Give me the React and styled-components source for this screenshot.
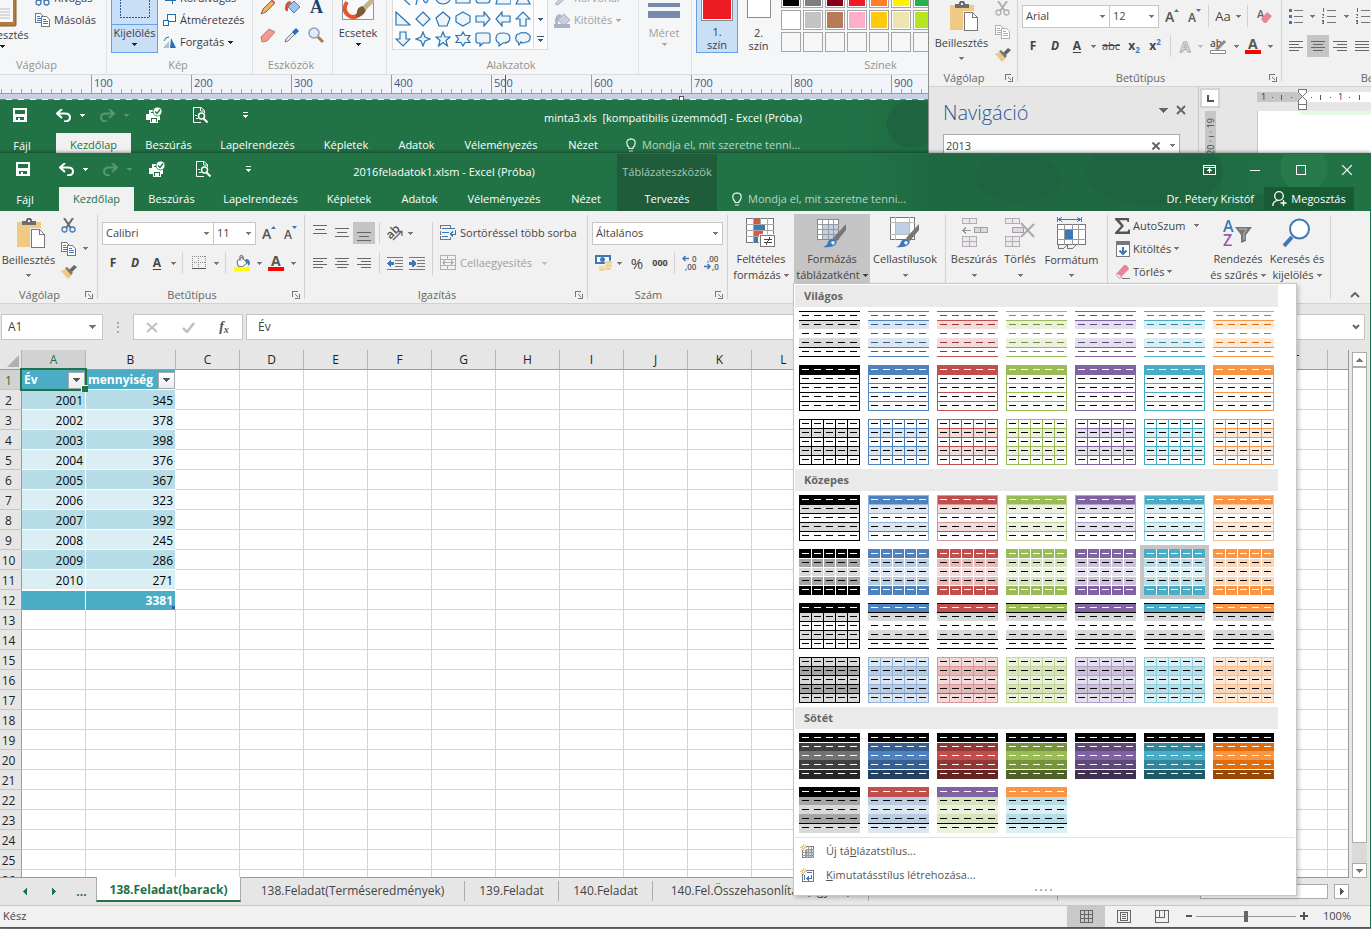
import styled, { createGlobalStyle, css } from 'styled-components'

const green = '#217346'
const darkGreen = '#1e5c3a'
const ink = '#444444'
const grey = '#777777'
const blue = '#3f78b5'
const tan = '#f0ca82'

const GlobalStyle = createGlobalStyle`
  * {
    box-sizing: border-box;
  }
  body {
    margin: 0;
    font-family: "Open Sans", "Noto Sans", sans-serif;
    font-size: 11px;
    line-height: 16px;
    color: ${ink};
    background: #e6e6e6;
  }
  button, input, select {
    font: inherit;
    color: inherit;
    margin: 0;
    padding: 0;
    border: 0;
    background: none;
    outline: none;
    border-radius: 0;
  }
  svg {
    display: block;
    flex: none;
  }
`

const Desktop = styled.div`
  height: 100vh;
  display: flex;
  flex-direction: column;
  overflow: hidden;
  background: #8d8d8d;
`
const BackRow = styled.div`
  display: flex;
  height: 153px;
  overflow: hidden;
`

/* ---------- shared ribbon parts ---------- */

const Ribbon = styled.div`
  display: flex;
  flex: none;
  height: 93px;
  background: #f1f1f1;
  border-bottom: 1px solid #d2d2d2;
  margin-top: ${p => p.$cut ? '-6px' : '0'};
`
const RibbonGroup = styled.div`
  display: flex;
  flex-direction: column;
  flex: none;
  width: ${p => p.$w}px;
  padding-top: 3px;
`
const GroupSep = styled.div`
  flex: none;
  width: 1px;
  margin: 4px 0;
  background: #d2d2d2;
`
const GroupBody = styled.div`
  display: flex;
  height: 69px;
  padding-left: ${p => p.$pad || 0}px;
`
const GroupLabel = styled.div`
  display: flex;
  align-items: center;
  height: 20px;
  padding: 4px 4px 0 0;
  color: #666;
  white-space: nowrap;
  overflow: hidden;
  span {
    flex: 1;
    text-align: center;
    padding-right: 6px;
    padding-left: ${p => p.$indent || 0}px;
  }
`
const BigButton = styled.button`
  display: flex;
  flex-direction: column;
  align-items: center;
  flex: none;
  width: ${p => p.$w}px;
  height: 69px;
  padding-top: 3px;
  white-space: nowrap;
  background: ${p => p.$on ? '#c5c5c5' : 'none'};
`
const BigIcon = styled.span`
  display: flex;
  align-items: center;
  justify-content: center;
  height: 32px;
  margin-bottom: 3px;
`
const Line = styled.span`
  display: flex;
  align-items: center;
  gap: 3px;
  height: 16px;
`
const ToolColumn = styled.div`
  display: flex;
  flex-direction: column;
  gap: 8px;
  padding-top: 8px;
`
const ToolRow = styled.div`
  display: flex;
  align-items: center;
  height: 22px;
`
const Tool = styled.button`
  display: flex;
  align-items: center;
  justify-content: center;
  flex: none;
  width: ${p => p.$w || 22}px;
  height: 22px;
  white-space: nowrap;
  background: ${p => p.$on ? '#c5c5c5' : 'none'};
  font-size: ${p => p.$size || 11}px;
  font-weight: ${p => p.$bold ? 700 : 400};
  font-style: ${p => p.$italic ? 'italic' : 'normal'};
  text-decoration: ${p => p.$line || 'none'};
  text-underline-offset: 2px;
  sub, sup {
    font-size: 8px;
    line-height: 8px;
    color: ${blue};
  }
  sub {
    align-self: flex-end;
    padding-bottom: 3px;
  }
  sup {
    align-self: flex-start;
    padding-top: 3px;
  }
`
const WideTool = styled.button`
  display: flex;
  align-items: center;
  gap: 4px;
  height: 22px;
  padding-left: 3px;
  white-space: nowrap;
  color: ${p => p.$off ? '#a0a0a0' : ink};
  svg:last-child {
    margin-left: ${p => p.$gap || 0}px;
  }
`
const ToolSep = styled.span`
  flex: none;
  width: 1px;
  height: ${p => p.$tall ? '54px' : '22px'};
  margin: ${p => p.$tall ? '8px 4px 0' : '0 4px'};
  background: #d2d2d2;
`
const SmallStack = styled.div`
  display: flex;
  flex-direction: column;
  width: ${p => p.$w}px;
`
const SmallButton = styled.button`
  display: flex;
  align-items: center;
  gap: 3px;
  height: 23px;
  white-space: nowrap;
  padding-left: ${p => p.$pad || 0}px;
  svg:last-child:not(:first-child) {
    margin-left: ${p => p.$gap || 0}px;
  }
`
const ComboFrame = styled.span`
  display: flex;
  align-items: center;
  flex: none;
  width: ${p => p.$w}px;
  height: 23px;
  padding: 0 4px 0 3px;
  background: #fff;
  border: 1px solid #c6c6c6;
  margin-left: ${p => p.$join ? '-1px' : '0'};
  select {
    flex: 1;
    min-width: 0;
    appearance: none;
  }
`
const CaretButton = styled.button`
  display: flex;
  align-items: center;
  justify-content: center;
  flex: none;
  width: ${p => p.$w || 10}px;
  height: ${p => p.$h || 22}px;
`

function Ico({ w = 16, h = 16, soft, children }) {
  return (
    <svg width={w} height={h} viewBox={`0 0 ${w} ${h}`} fill="none" shapeRendering={soft ? 'auto' : 'crispEdges'} aria-hidden="true">
      {children}
    </svg>
  )
}

function Caret({ color = grey }) {
  return <Ico w={5} h={3}><path d="M0 0h5v1H4v1H3v1H2V2H1V1H0z" fill={color} /></Ico>
}

function DropCaret({ color, w, h, label = 'Továbbiak' }) {
  return <CaretButton $w={w} $h={h} aria-label={label}><Caret color={color} /></CaretButton>
}

function Combo({ w, value, label, join }) {
  return (
    <ComboFrame $w={w} $join={join}>
      <select aria-label={label} defaultValue={value}>
        <option>{value}</option>
      </select>
      <Caret />
    </ComboFrame>
  )
}

function Launcher() {
  return (
    <Ico w={8} h={8}>
      <path d="M0.5 6V0.5H6M3 3l3 3M7.5 3v4.5H3" stroke="#777" />
    </Ico>
  )
}

/* ---------- ribbon icons ---------- */

const PasteIcon = () => (
  <Ico w={32} h={32}>
    <g transform="translate(4 1)">
      <path d="M0 4h24v25H0z" fill={tan} />
      <path d="M5 7V3h4V1h1V0h4v1h1v2h4v4z" fill="#6d6d6d" />
      <path d="M11 2h2v2h-2z" fill="#f1f1f1" />
      <path d="M13 10h11l4 4v17H13z" fill="#f1f1f1" />
      <path d="M14.500 11.500h8l5 5v13h-13z" fill="#fff" stroke="#777" />
      <path d="M22.500 11.500v5h5" stroke="#777" />
    </g>
  </Ico>
)
const CutIcon = ({ off }) => (
  <Ico w={15} h={15} soft>
    <path d="M3 0l6.500 9.500M12 0L5.500 9.500" stroke={off ? '#b0b0b0' : '#666'} strokeWidth="2" />
    <circle cx="3.500" cy="11.500" r="2.500" stroke={off ? '#b0b0b0' : blue} strokeWidth="1.300" />
    <circle cx="11.500" cy="11.500" r="2.500" stroke={off ? '#b0b0b0' : blue} strokeWidth="1.300" />
  </Ico>
)
const CopyIcon = ({ off }) => {
  const line = off ? '#b0b0b0' : '#777'
  const dash = off ? '#b0b0b0' : blue
  return (
    <Ico w={15} h={14}>
      <path d="M0.500 0.500h5l3 3v6h-8z" fill="#fff" stroke={line} />
      <path d="M2 3.500h3M2 5.500h4M2 7.500h4" stroke={dash} />
      <path d="M6.500 3.500h5l3 3v7h-8z" fill="#fff" stroke={line} />
      <path d="M8 6.500h3M8 8.500h5M8 10.500h5" stroke={dash} />
    </Ico>
  )
}
const PainterIcon = () => (
  <Ico w={16} h={14} soft>
    <path d="M0 6l5-2 6 6-4 4z" fill={tan} />
    <path d="M4 3l2-1 6 6-2 2z" fill="#777" />
    <path d="M8 5l5-5 3 2-5 5z" fill="#666" />
  </Ico>
)
const FontSizeIcon = ({ down }) => (
  <Ico w={14} h={16} soft>
    <text x="0" y="14" fontSize={down ? 12 : 14} fontWeight="600" fill="#555">A</text>
    <path d={down ? 'M8 1h5l-2.500 3z' : 'M9 4h5l-2.500-3z'} fill={blue} />
  </Ico>
)
const BordersIcon = () => (
  <Ico w={14} h={14}>
    <path d="M0 0.500h14M0 6.500h14M0.500 0v12M6.500 0v12M13.500 0v12" stroke="#888" strokeDasharray="1 1" />
    <path d="M0 12.500h14" stroke="#555" />
  </Ico>
)
const FillIcon = () => (
  <Ico w={17} h={16} soft>
    <path d="M3 6l5-4 5 6-5 4-4-1z" fill="#fff" stroke="#666" />
    <path d="M6 6V1q1-1 3 0v4" stroke="#666" />
    <path d="M12 4q4 0 4 5l-2 2q0-4-3-5z" fill={blue} />
    <path d="M0 12h16v4H0z" fill="#ff0" />
  </Ico>
)
const FontColorIcon = () => (
  <Ico w={16} h={16} soft>
    <text x="3" y="11" fontSize="14" fontWeight="700" fill="#555">A</text>
    <path d="M0 12h16v4H0z" fill="#f00" />
  </Ico>
)
const lineSets = {
  top: [[0, 14, 0], [2, 10, 4], [0, 14, 8]],
  left: [[0, 14, 0], [0, 10, 3], [0, 14, 6], [0, 10, 9]],
  center: [[0, 14, 0], [2, 10, 3], [0, 14, 6], [2, 10, 9]],
  right: [[0, 14, 0], [4, 10, 3], [0, 14, 6], [4, 10, 9]],
  full: [[0, 14, 0], [0, 14, 3], [0, 14, 6], [0, 14, 9]]
}
const AlignIcon = ({ kind, drop = 0 }) => (
  <Ico w={14} h={18}>
    {lineSets[kind].map(([x, w, y]) => <rect key={y} x={x} y={y + 4 + drop} width={w} height="1" fill="#666" />)}
  </Ico>
)
const OrientationIcon = () => (
  <Ico w={17} h={16} soft>
    <text x="0" y="12" fontSize="12" fontWeight="600" fill="#555" transform="rotate(-45 5 9)">ab</text>
    <path d="M6 15l8-8M10.500 6.500H15V11" stroke="#666" strokeWidth="1.300" />
  </Ico>
)
const IndentIcon = ({ more }) => (
  <Ico w={17} h={13}>
    <path d="M0 0.500h16M8 3.500h8M8 6.500h8M8 9.500h8M0 12.500h16" stroke="#777" />
    {more
      ? <path d="M0 5h3V3h1l3 3v1L4 10H3V8H0z" fill={blue} />
      : <path d="M7 5H4V3H3L0 6v1l3 3h1V8h3z" fill={blue} />}
  </Ico>
)
const WrapIcon = () => (
  <Ico w={16} h={16}>
    <path d="M0.500 4V0.500h10V4M0.500 6v4M0.500 11v3.500h10V12" stroke="#777" />
    <path d="M2 3.500h13M2 7.500h7M2 11.500h6" stroke={blue} />
    <path d="M15.500 5v4h-4M13 6.500L10.500 9l2.500 2.500" stroke={blue} />
  </Ico>
)
const MergeIcon = () => (
  <Ico w={16} h={16}>
    <path d="M0.500 0.500h15v14H0.500zM0 4.500h16M0 10.500h16M7.500 0v4M7.500 11v4M3 7.500h10M5 5.500l-2 2 2 2M11 5.500l2 2-2 2" stroke="#b5adb5" />
  </Ico>
)
const CurrencyIcon = () => (
  <Ico w={17} h={16} soft>
    <path d="M1 1h14v7H1z" fill="#fff" stroke={blue} strokeWidth="2" />
    <circle cx="7.500" cy="4.500" r="2.500" fill={blue} />
    <path d="M10 6h7v3h-7zM10 9h7v3h-7zM4 11h6v2H4zM4 13h6v3H4zM10 12h6v3h-6z" fill={tan} stroke="#f1f1f1" strokeWidth="0.500" />
  </Ico>
)
const DecimalIcon = ({ less }) => (
  <Ico w={16} h={16} soft>
    <text x={less ? 3 : 10} y="7" fontSize="8" fontWeight="600" fill="#555">{less ? ',00' : '0'}</text>
    <text x={less ? 8 : 3} y="15" fontSize="8" fontWeight="600" fill="#555">{less ? ',0' : ',00'}</text>
    <path d={less ? 'M0 11.500h6M3.500 9L6 11.500 3.500 14' : 'M7 3.500H1M3.500 1L1 3.500 3.500 6'} stroke={blue} strokeWidth="1.500" />
  </Ico>
)
const ConditionalIcon = () => (
  <Ico w={30} h={30}>
    <path d="M0.500 0.500h27v24h-27z" fill="#fff" stroke="#777" />
    <path d="M0 6.500h28M0 12.500h28M0 18.500h28M7.500 0v25M14.500 0v25M21.500 0v25" stroke="#aaa" />
    <path d="M8 1h6v5H8zM8 13h9v5H8z" fill="#d9593a" />
    <path d="M8 7h11v5H8zM8 19h4v5H8z" fill={blue} />
    <path d="M13 16h17v14H13z" fill="#f1f1f1" />
    <path d="M14.500 17.500h14v11h-14z" fill="#fff" stroke="#777" />
    <path d="M18 21.500h8M18 24.500h8M24 19l-4 8" stroke="#444" />
  </Ico>
)
const BrushOver = () => (
  <g shapeRendering="auto">
    <path d="M29 7v6l-9 11-4-3z" fill="#777" />
    <path d="M6 30q4-1 5-5 2-4 6-3 4 2 2 5-4 4-13 3z" fill={blue} />
    <path d="M14 26q0-2 3-2l1 2-2 2z" fill="#e8f0f8" />
  </g>
)
const FormatTableIcon = () => (
  <Ico w={30} h={31}>
    <path d="M0.500 2.500h21v20h-21z" fill="#fff" />
    <path d="M6 8h16v15H6z" fill="#bfd0e6" />
    <path d="M0.500 2.500h21v20h-21z" stroke="#888" />
    <path d="M0 7.500h22M0 12.500h22M0 17.500h22M5.500 2v21M11.500 2v21M16.500 2v21" stroke="#999" />
    <BrushOver />
  </Ico>
)
const CellStyleIcon = () => (
  <Ico w={30} h={31}>
    <path d="M0.500 0.500h24v22h-24z" fill="#fff" stroke="#777" />
    <path d="M0 5.500h25M0 17.500h25M5.500 0v23M19.500 0v23" stroke="#bbb" />
    <path d="M6 6h13v11H6z" fill="#bfd0e6" />
    <BrushOver />
  </Ico>
)
const InsertIcon = () => (
  <Ico w={27} h={30}>
    <path d="M1.500 0.500h14v5h-14zM8.500 0v6M1.500 18.500h14v10h-14zM8.500 18v11M1 23.500h15" fill="#ede8ee" stroke="#b5adb5" />
    <path d="M13.500 9.500h13v5h-13zM19.500 9v6" fill="#dcd8dd" stroke="#a5a0a5" />
    <path d="M10 12.500H2M5 9.500L2 12.500l3 3" stroke="#999" />
  </Ico>
)
const DeleteIcon = () => (
  <Ico w={30} h={30}>
    <path d="M0.500 0.500h14v5h-14zM7.500 0v6M0.500 18.500h14v10h-14zM7.500 18v11M0 23.500h15" fill="#ede8ee" stroke="#b5adb5" />
    <path d="M7.500 9.500h11v5h-11z" fill="#dcd8dd" stroke="#a5a0a5" />
    <path d="M16 5l13 14M29 6L16 19" stroke="#aaa" strokeWidth="2" shapeRendering="auto" />
  </Ico>
)
const FormatIcon = () => (
  <Ico w={29} h={32}>
    <path d="M0.500 0v5M24.500 0v5M2 2.500h21M5 0L2 2.500 5 5M20 0l3 2.500L20 5" stroke={blue} />
    <path d="M0.500 7.500h28v20h-28z" fill="#fff" stroke="#777" />
    <path d="M0 12.500h29M0 22.500h29M7.500 7v21M15.500 7v21M21.500 7v21" stroke="#999" />
    <path d="M8 13h8v9H8z" fill={blue} />
    <path d="M1 28v3h6l3-3M10 28v3h6l3-3" stroke="#777" />
  </Ico>
)
const SumIcon = () => (
  <Ico w={15} h={16} soft>
    <path d="M0 0h14v4h-1.500L12 2.300H4.500L9 8l-5 5.500h8.500l1-2H15V16H0v-1.500L6 8 0 1.500z" fill="#555" />
  </Ico>
)
const FillDownIcon = () => (
  <Ico w={14} h={16}>
    <path d="M0.500 0.500h13v15H0.500z" fill="#fff" stroke="#777" />
    <path d="M0 0h14v4H0z" fill="#777" />
    <path d="M7 6v7M3.500 9.500L7 13l3.500-3.500" stroke={blue} strokeWidth="2" shapeRendering="auto" />
  </Ico>
)
const EraseIcon = () => (
  <Ico w={14} h={14} soft>
    <path d="M1 8L8 0q2-1 4 2t-1 4l-6 6H3Q0 11 1 8z" fill="#e88594" />
    <path d="M1 8l5 4-1 1H3Q0 11 1 8z" fill="#fff" stroke="#e88594" />
    <path d="M6 13.500h8" stroke="#777" />
  </Ico>
)
const ClearFormatIcon = () => (
  <Ico w={15} h={16} soft>
    <text x="0" y="10" fontSize="11" fontWeight="600" fill="#666">A</text>
    <path d="M4 11l6-7 5 4-6 7H7z" fill="#e88594" />
  </Ico>
)
const SortIcon = () => (
  <Ico w={30} h={30} soft>
    <text x="0" y="14" fontSize="16" fontWeight="600" fill={blue}>A</text>
    <text x="0" y="28" fontSize="16" fontWeight="600" fill="#9459b5">Z</text>
    <path d="M12 9h17l-6 8v6l-5 2v-8z" fill="#777" />
    <path d="M16 11h8l-3 4v7" stroke="#bbb" />
  </Ico>
)
const FindIcon = () => (
  <Ico w={29} h={30} soft>
    <path d="M1 28l8-9" stroke={blue} strokeWidth="4" />
    <circle cx="16.500" cy="11" r="9.500" fill="#fff" stroke={blue} strokeWidth="2" />
  </Ico>
)

/* ---------- Paint window ---------- */

const PaintSide = styled.div`
  flex: 1;
  min-width: 0;
  height: 153px;
  overflow: hidden;
`
const PaintRibbon = styled.div`
  display: flex;
  height: 75px;
  overflow: hidden;
  background: #f5f6f7;
  border-bottom: 1px solid #dadbdc;
`
const PaintGroup = styled.div`
  display: flex;
  flex-direction: column;
  justify-content: flex-end;
  flex: none;
  width: ${p => p.$w}px;
  height: 74px;
  overflow: hidden;
  border-right: 1px solid #e2e3e4;
`
const PaintBody = styled.div`
  display: flex;
  align-items: flex-end;
  height: 53px;
  padding-left: ${p => p.$pad || 0}px;
`
const PaintLabel = styled.div`
  height: 21px;
  padding: 4px ${p => p.$right || 0}px 0 0;
  text-align: center;
  color: #929294;
`
const PaintBig = styled.button`
  display: flex;
  flex-direction: column;
  align-items: center;
  justify-content: flex-end;
  flex: none;
  width: ${p => p.$w}px;
  height: 74px;
  margin-left: ${p => p.$ml || 0}px;
  white-space: nowrap;
  color: ${p => p.$off ? '#a0a0a4' : '#3b3b4a'};
  ${p => p.$on && css`
    background: #c9dff5;
    border: 1px solid #62a2e4;
  `}
`
const PaintText = styled.span`
  display: flex;
  flex-direction: column;
  align-items: center;
  line-height: 13px;
  height: 28px;
  width: 100%;
  padding-top: 1px;
  gap: ${p => p.$two ? '0' : '4px'};
  border-top: ${p => p.$split ? '1px solid #62a2e4' : '0'};
`
const PaintStack = styled.div`
  display: flex;
  flex-direction: column;
  justify-content: flex-end;
  padding-left: ${p => p.$pad || 0}px;
`
const PaintSmall = styled.button`
  display: flex;
  align-items: center;
  gap: 4px;
  height: 22px;
  white-space: nowrap;
  color: ${p => p.$off ? '#a0a0a4' : '#3b3b4a'};
`
const ToolGrid = styled.div`
  display: grid;
  grid-template-columns: repeat(3, 24px);
  grid-auto-rows: 28px;
  justify-items: center;
  align-items: center;
  margin-bottom: 4px;
`
const ShapeBox = styled.div`
  display: flex;
  flex: none;
  margin: 0 0 3px;
  border: 1px solid #dadbdc;
  background: #fbfcfd;
`
const ShapeGrid = styled.div`
  display: grid;
  grid-template-columns: repeat(7, 20px);
  grid-auto-rows: 20px;
  justify-items: center;
  align-items: center;
`
const ShapeScroll = styled.div`
  display: grid;
  grid-template-rows: repeat(3, 20px);
  justify-items: center;
  align-items: center;
  width: 14px;
  border-left: 1px solid #dadbdc;
`
const Swatch = styled.span`
  display: block;
  width: ${p => p.$w}px;
  height: 40px;
  margin-bottom: ${p => p.$gap}px;
  background: ${p => p.$color};
  border: 1px solid #8a8a8a;
  box-shadow: inset 0 0 0 1px #fff;
`
const Palette = styled.div`
  display: grid;
  grid-template-columns: repeat(7, 20px);
  grid-auto-rows: 20px;
  gap: 2px;
  margin: 0 0 1px 2px;
`
const Chip = styled.button`
  border: 1px solid #a5a5a5;
  background: ${p => p.$color || '#f5f6f7'};
  box-shadow: ${p => p.$color ? 'inset 0 0 0 1px #fff' : 'none'};
`
const Ruler = styled.div`
  display: flex;
  position: relative;
  height: 19px;
  overflow: hidden;
  color: #43597c;
  border-bottom: 1px solid #8e9cb5;
  background: repeating-linear-gradient(90deg, transparent 0 1px, #9aa3b5 1px 2px, transparent 2px 10px) 0 100% / 100% 4px no-repeat, #f2f3f9;
`
const RulerMark = styled.span`
  flex: none;
  width: ${p => p.$first ? 91 : 100}px;
  padding-left: 2px;
  border-left: ${p => p.$first ? '0' : '1px solid #8e9cb5'};
`
const RulerCursor = styled.span`
  position: absolute;
  top: 0;
  left: 505px;
  width: 1px;
  height: 19px;
  background: #e02020;
`
const CanvasEdge = styled.div`
  display: flex;
  align-items: flex-end;
  justify-content: center;
  height: 6px;
  padding-left: 434px;
  background: repeating-linear-gradient(90deg, #3b93dc 0 6px, #fff 6px 12px) 0 100% / 100% 1px no-repeat, #c8d1e3;
`
const CanvasHandle = styled.span`
  width: 5px;
  height: 4px;
  background: #fff;
  border: 1px solid #555;
  border-bottom: 0;
`

const shapeRows = [
  'M1 1l14 13',
  'M1 14q3-16 7-6t7-7',
  'M8 2a7 5.500 0 1 0 .1 0z',
  'M1 1h14v11H1z',
  'M4 1h8q3 0 3 3v5q0 3-3 3H4q-3 0-3-3V4q0-3 3-3z',
  'M4 2h10v6h2v5H1z',
  'M8 0l7 13H1z',
  'M1 1v13h14z',
  'M8 1l7 7-7 7-7-7z',
  'M8 1l7 6-3 8H4L1 7z',
  'M8 1l7 4v6l-7 4-7-4V5z',
  'M1 5h8V1l6 7-6 7v-4H1z',
  'M15 5H7V1L1 8l6 7v-4h8z',
  'M5 15V8H1l7-7 7 7h-4v7z',
  'M5 1v7H1l7 7 7-7h-4V1z',
  'M8 1l2 5 5 2-5 2-2 5-2-5-5-2 5-2z',
  'M8 1l2 5h5l-4 3.500L12.500 15 8 11.500 3.500 15 5 9.500 1 6h5z',
  'M8 1l2 3.500h5L12.500 8l2.500 3.500h-5L8 15l-2-3.500H1L3.500 8 1 4.500h5z',
  'M3 2h10q2 0 2 2v6q0 2-2 2H8l-3 3v-3H3q-2 0-2-2V4q0-2 2-2z',
  'M8 2q7 0 7 5t-7 5l-4 3v-3Q1 11 1 7q0-5 7-5z',
  'M4 3q2-2 4-1 3-1 5 1 3 2 2 4 0 4-4 4-3 2-5 0l-2 3-1-3Q0 9 1 6q0-3 3-3z'
]
const paletteColors = [
  '#000000', '#7f7f7f', '#880015', '#ed1c24', '#ff7f27', '#fff200', '#22b14c',
  '#ffffff', '#c3c3c3', '#b97a57', '#ffaec9', '#ffc90e', '#efe4b0', '#b5e61d',
  '', '', '', '', '', '', ''
]

const BucketIcon = ({ off }) => (
  <Ico soft>
    <path d="M4 8l6-6 6 6-6 6z" fill={off ? '#c7cfdf' : '#9cc4ea'} stroke={off ? '#a9b3c7' : '#5a7fa8'} />
    <path d="M1 9q0-6 5-7l2 2Q3 6 4 12q-3 1-3-3z" fill={off ? '#a9b3c7' : '#d9532c'} />
    {off && <path d="M0 12h16v4H0z" fill="#a9b3c7" />}
  </Ico>
)

function Paint() {
  return (
    <>
      <PaintRibbon>
        <PaintGroup $w={107}>
          <PaintBody>
            <PaintBig $w={56} $ml={-26}>
              <Ico w={30} h={48} soft>
                <path d="M1 0h28v46q0 1-1 1H1z" fill="#b07c3e" stroke="#8a5c28" />
                <path d="M1 4h25v39H1z" fill="#f7f7f7" />
                <path d="M3 30h20M3 33h20M3 36h20M3 39h20" stroke="#b9bfc9" />
              </Ico>
              <PaintText>Beillesztés<Caret color="#222" /></PaintText>
            </PaintBig>
            <PaintStack $pad={5}>
              <PaintSmall><CutIcon />Kivágás</PaintSmall>
              <PaintSmall><CopyIcon />Másolás</PaintSmall>
              <PaintSmall />
            </PaintStack>
          </PaintBody>
          <PaintLabel $right={33}>Vágólap</PaintLabel>
        </PaintGroup>
        <PaintGroup $w={146}>
          <PaintBody $pad={4}>
            <PaintBig $w={47} $on>
              <Ico w={30} h={28}><path d="M0.500 0v21.500h29V0" stroke="#1f5fa8" strokeDasharray="2 1" /></Ico>
              <PaintText $split>Kijelölés<Caret color="#222" /></PaintText>
            </PaintBig>
            <PaintStack $pad={5}>
              <PaintSmall>
                <Ico w={13}><path d="M2.500 0v10.500H13M0 3.500h9.500V14" stroke="#1f6fb0" /></Ico>Körülvágás
              </PaintSmall>
              <PaintSmall>
                <Ico w={13} h={12}><path d="M4.500 0.500h8v7h-8z" fill="#fff" stroke="#1f6fb0" /><path d="M0.500 6.500h5v5h-5z" fill="#fff" stroke="#1f6fb0" /></Ico>Átméretezés
              </PaintSmall>
              <PaintSmall>
                <Ico w={13} h={13} soft><path d="M0 12h6V5z" fill="#b8bcc4" /><path d="M7 12h6L8 2z" fill="#2672b8" /><path d="M1 5q1-4 5-4" stroke="#2672b8" /></Ico>Forgatás<Caret color="#222" />
              </PaintSmall>
            </PaintStack>
          </PaintBody>
          <PaintLabel $right={3}>Kép</PaintLabel>
        </PaintGroup>
        <PaintGroup $w={80}>
          <PaintBody $pad={3}>
            <ToolGrid>
              <Ico soft><path d="M1 15l2-5 9-9 3 3-9 9z" fill="#f2b25c" stroke="#7c6a55" /><path d="M11 2l3 3 1-2-2-2z" fill="#d9695f" /></Ico>
              <BucketIcon />
              <Ico soft><text x="2" y="14" fontFamily="Liberation Serif, serif" fontSize="18" fontWeight="700" fill="#233f6b">A</text></Ico>
              <Ico soft><path d="M1 10l8-8 6 3-8 9-5 1z" fill="#f0998f" stroke="#c9786f" /></Ico>
              <Ico soft><path d="M1 15l1-3 7-7 2 2-7 7z" fill="#dfeaf5" stroke="#777" /><path d="M8 5l4-4 3 3-4 4z" fill="#2672b8" /></Ico>
              <Ico soft><circle cx="6" cy="6" r="5" fill="#dcecfa" stroke="#8ea2b8" strokeWidth="1.500" /><path d="M10 10l5 5" stroke="#a9794f" strokeWidth="3" /></Ico>
            </ToolGrid>
          </PaintBody>
          <PaintLabel $right={3}>Eszközök</PaintLabel>
        </PaintGroup>
        <PaintGroup $w={54}>
          <PaintBody>
            <PaintBig $w={50}>
              <Ico w={32} h={27} soft>
                <path d="M0.500 0.500h31v21h-31z" fill="#f7f9fb" stroke="#8b97a5" />
                <path d="M5 4q-5 8 1 13t13-2" stroke="#e8562a" strokeWidth="4" />
                <path d="M15 14q0-5 6-6l3 4q-2 6-9 7-2 0 0-5z" fill="#7c5a3a" />
                <path d="M21 8l8-8h3v4l-8 8z" fill="#c9b28a" />
              </Ico>
              <PaintText>Ecsetek<Caret color="#222" /></PaintText>
            </PaintBig>
          </PaintBody>
          <PaintLabel />
        </PaintGroup>
        <PaintGroup $w={252}>
          <PaintBody $pad={5}>
            <ShapeBox>
              <ShapeGrid>
                {shapeRows.map(d => (
                  <Ico key={d} soft><path d={d} fill="#edf4fa" stroke="#2a74b5" strokeWidth="1.200" /></Ico>
                ))}
              </ShapeGrid>
              <ShapeScroll>
                <span /><Caret color="#43597c" />
                <Ico w={7} h={6}><path d="M0 0h7v1H0zM1 3h5v1H5v1H4v1H3V5H2V4H1z" fill="#43597c" /></Ico>
              </ShapeScroll>
            </ShapeBox>
            <PaintStack $pad={6}>
              <PaintSmall $off><Ico soft><path d="M1 14L12 2l3 3L4 15z" fill="#c7cfdf" stroke="#a9b3c7" /></Ico>Körvonal</PaintSmall>
              <PaintSmall $off><BucketIcon off />Kitöltés<Caret color="#aaa" /></PaintSmall>
              <PaintSmall />
            </PaintStack>
          </PaintBody>
          <PaintLabel $right={3}>Alakzatok</PaintLabel>
        </PaintGroup>
        <PaintGroup $w={53}>
          <PaintBody>
            <PaintBig $w={50} $off>
              <Ico w={32} h={22}><path d="M0 0h32v4H0zM0 8h32v7H0z" fill="#7589ad" /></Ico>
              <PaintText>Méret<Caret color="#aaa" /></PaintText>
            </PaintBig>
          </PaintBody>
          <PaintLabel />
        </PaintGroup>
        <PaintGroup $w={378}>
          <PaintBody $pad={4}>
            <PaintBig $w={42} $on>
              <Swatch $w={32} $gap={3} $color="#ed1c24" />
              <PaintText $two><span>1.</span><span>szín</span></PaintText>
            </PaintBig>
            <PaintBig $w={41}>
              <Swatch $w={24} $gap={7} $color="#fff" />
              <PaintText $two><span>2.</span><span>szín</span></PaintText>
            </PaintBig>
            <Palette>
              {paletteColors.map((c, i) => <Chip key={i} $color={c} aria-label={`${i + 1}. szín`} />)}
            </Palette>
          </PaintBody>
          <PaintLabel>Színek</PaintLabel>
        </PaintGroup>
      </PaintRibbon>
      <Ruler>
        <RulerMark $first />
        {[100, 200, 300, 400, 500, 600, 700, 800, 900, 1000].map(n => <RulerMark key={n}>{n}</RulerMark>)}
        <RulerCursor />
      </Ruler>
      <CanvasEdge><CanvasHandle /></CanvasEdge>
    </>
  )
}

/* ---------- Excel title bar and tabs ---------- */

const ExcelHeader = styled.header`
  flex: none;
  padding-left: ${p => p.$inset}px;
  color: #fff;
  background:
    radial-gradient(ellipse 44px 24px at calc(100% - 352px) 24px, #1e6440 96%, transparent),
    radial-gradient(ellipse 70px 34px at calc(100% - 215px) 18px, #1e6440 96%, transparent),
    radial-gradient(ellipse 36px 12px at calc(100% - 90px) 50px, #1e6440 96%, transparent),
    radial-gradient(ellipse 24px 24px at calc(100% - 66px) 14px, #267a4c 96%, transparent),
    linear-gradient(90deg, ${green} 0, ${green} 63%, #1f6841 68%, #1f6841 86%, ${green} 96%);
`
const BackHeader = styled(ExcelHeader)`
  background: radial-gradient(ellipse 26px 24px at calc(100% - 16px) 24px, #1e6440 96%, transparent), linear-gradient(90deg, ${green} 90%, #1f6c42);
`
const TitleRow = styled.div`
  display: flex;
  height: 33px;
`
const QuickCell = styled.button`
  display: flex;
  align-items: center;
  justify-content: center;
  flex: none;
  width: ${p => p.$w}px;
  height: 30px;
  margin-left: ${p => p.$ml || 0}px;
  opacity: ${p => p.$off ? 0.250 : 1};
`
const TitleText = styled.div`
  flex: none;
  width: ${p => p.$w ? p.$w + 'px' : 'auto'};
  padding-top: 10px;
  margin-left: ${p => p.$ml || 0}px;
  text-align: center;
  white-space: pre;
`
const ContextTitle = styled.div`
  flex: none;
  width: 100px;
  padding-top: 10px;
  text-align: center;
  white-space: nowrap;
  color: #a6c8b4;
  background: ${darkGreen};
`
const Spacer = styled.div`
  flex: 1;
`
const WindowButton = styled.button`
  display: flex;
  align-items: center;
  justify-content: center;
  width: 46px;
  height: 31px;
`
const TabRow = styled.nav`
  display: flex;
  height: 24px;
`
const Tab = styled.button`
  flex: none;
  width: ${p => p.$w}px;
  height: 24px;
  margin-right: ${p => p.$mr || 0}px;
  padding-top: ${p => p.$mr ? '2px' : '0'};
  white-space: nowrap;
  color: ${p => p.$on ? green : '#fff'};
  background: ${p => p.$on ? '#f1f1f1' : p.$context ? darkGreen : 'none'};
`
const TellMe = styled.label`
  display: flex;
  align-items: center;
  gap: 6px;
  width: 200px;
  padding-left: ${p => p.$pad}px;
  input {
    flex: 1;
    min-width: 0;
  }
  input::placeholder {
    color: #bad5c5;
    opacity: 1;
  }
`
const UserName = styled.span`
  padding: 4px 10px 0 0;
`
const ShareButton = styled.button`
  display: flex;
  align-items: center;
  justify-content: center;
  gap: 4px;
  width: 90px;
  height: 23px;
  margin-right: 16px;
  background: #185a34;
`

function QuickAccess() {
  return (
    <>
      <QuickCell $w={40} aria-label="Mentés">
        <Ico w={14} h={14}>
          <path d="M0 0h14v14H0zM2 2v4h10V2zM3 9v3h2v-2h2v2h4V9z" fill="#fff" fillRule="evenodd" />
        </Ico>
      </QuickCell>
      <QuickCell $w={30} $ml={8} aria-label="Visszavonás">
        <Ico w={15} h={13} soft><path d="M6 0L1 4.500 6 9M1.500 4.500H9q5 0 5 4t-6 4" stroke="#fff" strokeWidth="2" /></Ico>
      </QuickCell>
      <DropCaret color="#fff" w={8} h={30} />
      <QuickCell $w={30} $ml={6} $off aria-label="Ismét">
        <Ico w={15} h={13} soft><path d="M9 0l5 4.500L9 9M13.500 4.500H6q-5 0-5 4t6 4" stroke="#fff" strokeWidth="2" /></Ico>
      </QuickCell>
      <QuickCell $w={8} $off aria-label="Ismétlések"><Caret color="#fff" /></QuickCell>
      <QuickCell $w={48} aria-label="Gyorsnyomtatás">
        <Ico w={16} h={16} soft>
          <path d="M3 3h4v2H5v1h3v2h6v5h-2v3H4v-3H0V7h3z" fill="#fff" />
          <path d="M5 11h6v4H5z" fill={green} />
          <path d="M6 12h4v3H6z" fill="#fff" />
          <circle cx="11.500" cy="4.500" r="4.500" fill="#fff" stroke={green} strokeWidth="0.800" />
          <path d="M9 4.500l2 2 3-4" stroke={green} strokeWidth="1.300" />
        </Ico>
      </QuickCell>
      <QuickCell $w={44} aria-label="Nyomtatási kép">
        <Ico w={15} h={16} soft>
          <path d="M8 15.500H0.500V0.500H8l3.500 3V6M7.500 1v3h3.500" stroke="#fff" />
          <circle cx="8.500" cy="9" r="3" fill={green} stroke="#fff" strokeWidth="1.500" />
          <path d="M10.500 11.500l4 4" stroke="#fff" strokeWidth="2" />
          <path d="M2 8.500h2M3 11.500h2" stroke="#fff" />
        </Ico>
      </QuickCell>
      <QuickCell $w={46} aria-label="Gyorselérési eszköztár testreszabása">
        <Ico w={5} h={6}><path d="M0 0h5v1H0zM0 3h5v1H4v1H3v1H2V5H1V4H0z" fill="#fff" /></Ico>
      </QuickCell>
    </>
  )
}

function MainTabs() {
  return (
    <>
      <Tab $w={44} $mr={12}>Fájl</Tab>
      <Tab $w={75} $on>Kezdőlap</Tab>
      <Tab $w={75}>Beszúrás</Tab>
      <Tab $w={103}>Lapelrendezés</Tab>
      <Tab $w={74}>Képletek</Tab>
      <Tab $w={67}>Adatok</Tab>
      <Tab $w={102}>Véleményezés</Tab>
      <Tab $w={62}>Nézet</Tab>
    </>
  )
}

function TellMeBox({ pad }) {
  return (
    <TellMe $pad={pad}>
      <Ico w={10} h={14} soft>
        <path d="M3 9.500Q0.800 7.500 0.800 5q0-4 4.200-4.200Q9.200 1 9.200 5q0 2.500-2.200 4.500v1H3zM3 13h4" stroke="#e8f2ec" strokeWidth="1.200" />
      </Ico>
      <input aria-label="Mondja el, mit szeretne tenni" placeholder="Mondja el, mit szeretne tenni..." />
    </TellMe>
  )
}

/* ---------- Word window ---------- */

const WordSide = styled.div`
  flex: none;
  width: 443px;
  height: 153px;
  overflow: hidden;
  background: #e6e6e6;
  border-left: 1px solid #8f8f8f;
`
const WordBody = styled.div`
  display: flex;
  height: 66px;
`
const NavPane = styled.aside`
  flex: none;
  width: 270px;
  padding: 12px 12px 0 14px;
  border-right: 1px solid #c6c6c6;
`
const NavHead = styled.div`
  display: flex;
  align-items: center;
  gap: 8px;
  height: 28px;
  h2 {
    flex: 1;
    margin: 0;
    font-size: 20px;
    font-weight: 300;
    line-height: 28px;
    color: #2b579a;
  }
  svg {
    margin-bottom: 6px;
  }
`
const NavSearch = styled.div`
  display: flex;
  align-items: center;
  gap: 10px;
  height: 23px;
  margin: 7px 6px 0 0;
  padding: 0 4px 0 2px;
  background: #fff;
  border: 1px solid #ababab;
  input {
    flex: 1;
    min-width: 0;
  }
`
const RulerSide = styled.div`
  flex: none;
  width: 58px;
  padding: 1px 0 0 1px;
`
const TabStop = styled.div`
  display: flex;
  align-items: center;
  justify-content: center;
  width: 20px;
  height: 20px;
  background: #fff;
  border: 2px solid #d4d4d4;
`
const SideRuler = styled.div`
  width: 11px;
  height: 44px;
  margin: 3px 0 0 5px;
  background: #c6c6c6;
  font-size: 9px;
  line-height: 11px;
  writing-mode: vertical-rl;
  transform: rotate(180deg);
`
const PageSide = styled.div`
  flex: 1;
  min-width: 0;
  padding-top: 5px;
`
const TopRuler = styled.div`
  display: flex;
  height: 10px;
  background: linear-gradient(90deg, #c6c6c6 0 45px, #fff 45px);
  svg {
    overflow: visible;
  }
`
const Sheet = styled.div`
  height: 60px;
  margin-top: 9px;
  background: #fff;
  border-left: 1px solid #c6c6c6;
  &::before {
    content: "";
    display: block;
    height: 4px;
    margin-left: 42px;
    background: #e3fbe3;
  }
`

const ListIcon = ({ numbered }) => (
  <Ico w={14} h={16}>
    <path d="M5 2.500h9M5 8.500h9M5 14.500h9" stroke="#777" />
    {numbered
      ? <path d="M1 0h1v4H1zM0 6h2v2H1v1H0v1h2M0 12h2v4H0v-1h1v-1H0z" fill={blue} />
      : <path d="M0 1h3v3H0zM0 7h3v3H0zM0 13h3v3H0z" fill={blue} />}
  </Ico>
)

function Word() {
  return (
    <WordSide>
      <Ribbon $cut>
        <ClipboardGroup w={88} off />
        <GroupSep />
        <RibbonGroup $w={263}>
          <GroupBody $pad={4}>
            <ToolColumn>
              <ToolRow>
                <Combo w={88} value="Arial" label="Betűtípus" />
                <Combo w={50} value="12" label="Betűméret" join />
                <Tool $w={26} aria-label="Betűméret növelése"><FontSizeIcon /></Tool>
                <Tool $w={19} aria-label="Betűméret csökkentése"><FontSizeIcon down /></Tool>
                <ToolSep />
                <Tool $w={20} $size={13}>Aa</Tool>
                <DropCaret />
                <ToolSep />
                <Tool $w={24} aria-label="Formázás törlése"><ClearFormatIcon /></Tool>
              </ToolRow>
              <ToolRow>
                <Tool $bold $size={12}>F</Tool>
                <Tool $bold $italic $size={12}>D</Tool>
                <Tool $bold $size={12} $line="underline">A</Tool>
                <DropCaret />
                <Tool $w={26} $line="line-through">abc</Tool>
                <Tool $w={20} $bold $size={12}>x<sub>2</sub></Tool>
                <Tool $w={22} $bold $size={12}>x<sup>2</sup></Tool>
                <ToolSep />
                <Tool $w={20} aria-label="Szöveghatások">
                  <Ico soft><text x="3" y="14" fontSize="15" fontWeight="700" fill="#f1f1f1" stroke="#aaa">A</text></Ico>
                </Tool>
                <DropCaret color="#bbb" />
                <Tool $w={26} aria-label="Szövegkiemelés színe">
                  <Ico w={17} soft>
                    <text x="0" y="9" fontSize="10" fontWeight="600" fill="#555">ab</text>
                    <path d="M5 11l9-9 2 2-8 8z" fill="#888" />
                    <path d="M0.500 12.500h15v3h-15z" fill="#fff" stroke="#888" />
                  </Ico>
                </Tool>
                <DropCaret />
                <Tool $w={24} aria-label="Betűszín"><FontColorIcon /></Tool>
                <DropCaret />
              </ToolRow>
            </ToolColumn>
          </GroupBody>
          <GroupLabel><span>Betűtípus</span><Launcher /></GroupLabel>
        </RibbonGroup>
        <GroupSep />
        <RibbonGroup $w={200}>
          <GroupBody $pad={3}>
            <ToolColumn>
              <ToolRow>
                <Tool aria-label="Felsorolás"><ListIcon /></Tool>
                <DropCaret />
                <Tool $w={24} aria-label="Számozás"><ListIcon numbered /></Tool>
                <DropCaret />
                <Tool $w={24} aria-label="Többszintű lista"><ListIcon numbered /></Tool>
              </ToolRow>
              <ToolRow>
                <Tool aria-label="Balra igazítás"><AlignIcon kind="left" /></Tool>
                <Tool $on aria-label="Középre igazítás"><AlignIcon kind="center" /></Tool>
                <Tool aria-label="Jobbra igazítás"><AlignIcon kind="right" /></Tool>
                <Tool aria-label="Sorkizárás"><AlignIcon kind="full" /></Tool>
              </ToolRow>
            </ToolColumn>
          </GroupBody>
          <GroupLabel $indent={16}><span>Bekezdés</span></GroupLabel>
        </RibbonGroup>
      </Ribbon>
      <WordBody>
        <NavPane>
          <NavHead>
            <h2>Navigáció</h2>
            <Ico w={9} h={5}><path d="M0 0h9v1H8v1H7v1H6v1H5v1H4V4H3V3H2V2H1V1H0z" fill="#666" /></Ico>
            <Ico w={10} h={10} soft><path d="M1 1l8 8M9 1L1 9" stroke="#666" strokeWidth="2" /></Ico>
          </NavHead>
          <NavSearch>
            <input aria-label="Keresés a dokumentumban" defaultValue="2013" />
            <Ico w={8} h={8} soft><path d="M0.500 0.500l7 7M7.500 0.500l-7 7" stroke="#666" strokeWidth="2" /></Ico>
            <Caret />
          </NavSearch>
        </NavPane>
        <RulerSide>
          <TabStop><Ico w={7} h={7}><path d="M0 0h2v5h5v2H0z" fill="#555" /></Ico></TabStop>
          <SideRuler>20 · ı · 19</SideRuler>
        </RulerSide>
        <PageSide>
          <TopRuler>
            <Ico w={120} h={10}>
              <path d="M15 5h1v1h-1zM24 3h1v5h-1zM34 5h1v1h-1zM54 5h1v1h-1zM63 3h1v5h-1zM73 5h1v1h-1zM92 5h1v1h-1zM102 3h1v5h-1z" fill="#555" />
              <text x="4" y="8" fontSize="9" fill="#333">1</text>
              <text x="81" y="8" fontSize="9" fill="#333">1</text>
              <path d="M41.500 -2.500h8v3l-8 8v4h8v-4l-8-8z" fill="#fff" stroke="#777" />
              <path d="M41.500 12.500h8v5h-8z" fill="#fff" stroke="#777" />
            </Ico>
          </TopRuler>
          <Sheet />
        </PageSide>
      </WordBody>
    </WordSide>
  )
}

/* ---------- main Excel ribbon ---------- */

const CollapseButton = styled.button`
  align-self: flex-end;
  width: 30px;
  height: 16px;
  padding-left: 10px;
`

function ClipboardGroup({ w, off }) {
  return (
    <RibbonGroup $w={w}>
      <GroupBody>
        <BigButton $w={off ? 65 : 57}>
          <BigIcon><PasteIcon /></BigIcon>
          <Line>Beillesztés</Line>
          <Line><Caret /></Line>
        </BigButton>
        <SmallStack $w={off ? 23 : 40}>
          <SmallButton $pad={off ? 1 : 4} aria-label="Kivágás"><CutIcon off={off} /></SmallButton>
          <SmallButton $pad={off ? 1 : 4} $gap={4} aria-label="Másolás"><CopyIcon off={off} />{!off && <Caret />}</SmallButton>
          <SmallButton $pad={off ? 1 : 4} aria-label="Formátummásoló"><PainterIcon /></SmallButton>
        </SmallStack>
      </GroupBody>
      <GroupLabel><span>Vágólap</span><Launcher /></GroupLabel>
    </RibbonGroup>
  )
}

function ExcelRibbon() {
  return (
    <Ribbon>
      <ClipboardGroup w={97} />
      <GroupSep />
      <RibbonGroup $w={206}>
        <GroupBody $pad={4}>
          <ToolColumn>
            <ToolRow>
              <Combo w={112} value="Calibri" label="Betűtípus" />
              <Combo w={43} value="11" label="Betűméret" join />
              <Tool $w={25} aria-label="Betűméret növelése"><FontSizeIcon /></Tool>
              <Tool $w={20} aria-label="Betűméret csökkentése"><FontSizeIcon down /></Tool>
            </ToolRow>
            <ToolRow>
              <Tool $bold $size={12}>F</Tool>
              <Tool $bold $italic $size={12}>D</Tool>
              <Tool $bold $size={12} $line="underline">A</Tool>
              <DropCaret />
              <ToolSep />
              <Tool $w={24} aria-label="Szegélyek"><BordersIcon /></Tool>
              <DropCaret />
              <ToolSep />
              <Tool $w={24} aria-label="Kitöltőszín"><FillIcon /></Tool>
              <DropCaret />
              <Tool $w={24} aria-label="Betűszín"><FontColorIcon /></Tool>
              <DropCaret />
            </ToolRow>
          </ToolColumn>
        </GroupBody>
        <GroupLabel><span>Betűtípus</span><Launcher /></GroupLabel>
      </RibbonGroup>
      <GroupSep />
      <RibbonGroup $w={282}>
        <GroupBody $pad={4}>
          <ToolColumn>
            <ToolRow>
              <Tool aria-label="Felülre igazítás"><AlignIcon kind="top" drop={-3} /></Tool>
              <Tool aria-label="Középre igazítás függőlegesen"><AlignIcon kind="top" /></Tool>
              <Tool $on aria-label="Alulra igazítás"><AlignIcon kind="top" drop={4} /></Tool>
              <ToolSep />
              <Tool aria-label="Tájolás"><OrientationIcon /></Tool>
              <DropCaret w={8} />
            </ToolRow>
            <ToolRow>
              <Tool aria-label="Balra igazítás"><AlignIcon kind="left" /></Tool>
              <Tool aria-label="Középre igazítás"><AlignIcon kind="center" /></Tool>
              <Tool aria-label="Jobbra igazítás"><AlignIcon kind="right" /></Tool>
              <ToolSep />
              <Tool aria-label="Behúzás csökkentése"><IndentIcon /></Tool>
              <Tool aria-label="Behúzás növelése"><IndentIcon more /></Tool>
            </ToolRow>
          </ToolColumn>
          <ToolSep $tall />
          <ToolColumn>
            <WideTool><WrapIcon />Sortöréssel több sorba</WideTool>
            <WideTool $off $gap={6}><MergeIcon />Cellaegyesítés<Caret color="#bbb" /></WideTool>
          </ToolColumn>
        </GroupBody>
        <GroupLabel><span>Igazítás</span><Launcher /></GroupLabel>
      </RibbonGroup>
      <GroupSep />
      <RibbonGroup $w={139}>
        <GroupBody $pad={4}>
          <ToolColumn>
            <ToolRow><Combo w={131} value="Általános" label="Számformátum" /></ToolRow>
            <ToolRow>
              <Tool aria-label="Könyvelési számformátum"><CurrencyIcon /></Tool>
              <DropCaret />
              <Tool $w={26} $size={15}>%</Tool>
              <Tool $w={20} $bold $size={9}>000</Tool>
              <ToolSep />
              <Tool aria-label="Tizedeshelyek növelése"><DecimalIcon /></Tool>
              <Tool aria-label="Tizedeshelyek csökkentése"><DecimalIcon less /></Tool>
            </ToolRow>
          </ToolColumn>
        </GroupBody>
        <GroupLabel><span>Szám</span><Launcher /></GroupLabel>
      </RibbonGroup>
      <GroupSep />
      <RibbonGroup $w={217}>
        <GroupBody>
          <BigButton $w={66}>
            <BigIcon><ConditionalIcon /></BigIcon>
            <Line>Feltételes</Line>
            <Line>formázás<Caret /></Line>
          </BigButton>
          <MenuAnchor>
            <BigButton $w={76} $on aria-expanded="true">
              <BigIcon><FormatTableIcon /></BigIcon>
              <Line>Formázás</Line>
              <Line>táblázatként<Caret color="#444" /></Line>
            </BigButton>
            <StyleGallery />
          </MenuAnchor>
          <BigButton $w={70}>
            <BigIcon><CellStyleIcon /></BigIcon>
            <Line>Cellastílusok</Line>
            <Line><Caret /></Line>
          </BigButton>
        </GroupBody>
      </RibbonGroup>
      <GroupSep />
      <RibbonGroup $w={161}>
        <GroupBody $pad={2}>
          <BigButton $w={52}>
            <BigIcon><InsertIcon /></BigIcon>
            <Line>Beszúrás</Line>
            <Line><Caret /></Line>
          </BigButton>
          <BigButton $w={40}>
            <BigIcon><DeleteIcon /></BigIcon>
            <Line>Törlés</Line>
            <Line><Caret /></Line>
          </BigButton>
          <BigButton $w={63}>
            <BigIcon><FormatIcon /></BigIcon>
            <Line>Formátum</Line>
            <Line><Caret /></Line>
          </BigButton>
        </GroupBody>
      </RibbonGroup>
      <GroupSep />
      <RibbonGroup $w={222}>
        <GroupBody $pad={7}>
          <SmallStack $w={94}>
            <SmallButton $gap={6}><SumIcon />AutoSzum<Caret /></SmallButton>
            <SmallButton $pad={1}><FillDownIcon />Kitöltés<Caret /></SmallButton>
            <SmallButton $pad={1}><EraseIcon />Törlés<Caret /></SmallButton>
          </SmallStack>
          <BigButton $w={58}>
            <BigIcon><SortIcon /></BigIcon>
            <Line>Rendezés</Line>
            <Line>és szűrés<Caret /></Line>
          </BigButton>
          <BigButton $w={60}>
            <BigIcon><FindIcon /></BigIcon>
            <Line>Keresés és</Line>
            <Line>kijelölés<Caret /></Line>
          </BigButton>
        </GroupBody>
      </RibbonGroup>
      <GroupSep />
      <Spacer />
      <CollapseButton aria-label="Menüszalag összecsukása">
        <Ico w={10} h={6} soft><path d="M1 5l4-4 4 4" stroke="#666" strokeWidth="2" /></Ico>
      </CollapseButton>
    </Ribbon>
  )
}

/* ---------- table style gallery ---------- */

const MenuAnchor = styled.div`
  position: relative;
`
const Gallery = styled.div`
  position: absolute;
  z-index: 5;
  top: 69px;
  left: -1px;
  width: 504px;
  padding: 1px;
  background: #fff;
  border: 1px solid #c6c6c6;
  box-shadow: 2px 2px 4px rgba(0, 0, 0, 0.200);
`
const GalleryHead = styled.h3`
  width: 483px;
  height: 22px;
  margin: 0;
  padding: 2px 0 0 9px;
  font-size: 11px;
  font-weight: 700;
  line-height: 18px;
  color: #666;
  background: #eaeaea;
`
const GalleryRows = styled.div`
  display: grid;
  grid-template-columns: repeat(7, 61px);
  gap: 8px;
  padding: 4px;
`
const StyleButton = styled.button`
  width: 61px;
  height: 46px;
  outline: ${p => p.$on ? '4px solid #c5c5c5' : 'none'};
`
const GalleryFoot = styled.div`
  padding: 1px 0 0 5px;
  border-top: 1px solid #e1e1e1;
`
const FootItem = styled.button`
  display: flex;
  align-items: center;
  gap: 11px;
  height: 24px;
  color: #555;
`
const Grip = styled.div`
  display: flex;
  justify-content: center;
  gap: 3px;
  height: 7px;
  padding: 2px 4px 0 0;
  i {
    width: 2px;
    height: 2px;
    background: #b5b5bd;
  }
`

const accents = [
  { base: '#000000', tint: '#d9d9d9', mid: '#a6a6a6', edge: '#000000', dash: '#000000', deep: '#404040', body: '#737373', foot: '#262626' },
  { base: '#4f81bd', tint: '#dce6f1', mid: '#b8cce4', edge: '#95b3d7', dash: '#366092', deep: '#366092', body: '#4f81bd', foot: '#244062' },
  { base: '#c0504d', tint: '#f2dcdb', mid: '#e6b8b7', edge: '#da9694', dash: '#963634', deep: '#963634', body: '#c0504d', foot: '#632523' },
  { base: '#9bbb59', tint: '#ebf1de', mid: '#d8e4bc', edge: '#c4d79b', dash: '#76933c', deep: '#76933c', body: '#9bbb59', foot: '#4f6228' },
  { base: '#8064a2', tint: '#e4dfec', mid: '#ccc0da', edge: '#b1a0c7', dash: '#60497a', deep: '#60497a', body: '#8064a2', foot: '#403151' },
  { base: '#4bacc6', tint: '#daeef3', mid: '#b7dee8', edge: '#92cddc', dash: '#31869b', deep: '#31869b', body: '#4bacc6', foot: '#215967' },
  { base: '#f79646', tint: '#fde9d9', mid: '#fcd5b4', edge: '#fabf8f', dash: '#e26b0a', deep: '#e26b0a', body: '#f79646', foot: '#974706' }
]

// each recipe gives row fills, horizontal rules by line index, vertical rules and dash colours
const dark = ['#fff', '#000', '#000', '#000', '#000']
const allLines = c => ({ 0: c, 1: c, 2: c, 3: c, 4: c, 5: c })
const recipes = {
  light1: a => ({ rows: ['#fff', a.tint, '#fff', a.tint, '#fff'], h: { 0: a.base, 1: a.base, 4: a.base, 5: a.base }, dash: Array(5).fill(a.dash) }),
  light2: a => ({ rows: [a.base, '#fff', '#fff', '#fff', '#fff'], h: allLines(a.base), side: a.base, dash: dark }),
  light3: a => ({ rows: ['#fff', a.tint, '#fff', a.tint, '#fff'], h: allLines(a.base), side: a.base, inner: a.base, dash: Array(5).fill('#000') }),
  medium1: a => ({ rows: [a.base, a.tint, '#fff', a.tint, '#fff'], h: { ...allLines(a.edge), 4: a.base }, side: a.edge, dash: dark }),
  medium2: a => ({ rows: [a.base, a.mid, a.tint, a.mid, a.base], h: { 1: '#fff', 2: '#fff', 3: '#fff', 4: '#fff' }, inner: '#fff', dash: ['#fff', '#000', '#000', '#000', '#fff'] }),
  medium3: (a, first) => first
    ? { rows: ['#000', a.tint, '#fff', a.tint, '#fff'], h: allLines('#000'), side: '#000', inner: '#000', dash: dark }
    : { rows: [a.base, '#d9d9d9', '#fff', '#d9d9d9', '#fff'], h: { 0: '#000', 1: '#000', 4: '#000', 5: '#000' }, dash: dark },
  medium4: a => ({ rows: [a.tint, a.mid, a.tint, a.mid, a.tint], h: { ...allLines(a.edge), 4: a.base }, side: a.edge, inner: a.edge, dash: Array(5).fill('#000') }),
  dark1: a => ({ rows: ['#000', a.deep, a.body, a.deep, a.foot], h: { 1: '#fff', 4: '#fff' }, dash: Array(5).fill('#fff') }),
  dark2: a => ({ rows: [a.head, a.mid, a.tint, a.mid, a.tint], h: { 1: a.head, 4: '#000' }, dash: dark })
}
const darkPairs = [
  { ...accents[0], head: '#000000' },
  { ...accents[1], head: '#c0504d' },
  { ...accents[3], head: '#8064a2' },
  { ...accents[5], head: '#f79646' }
]

function Thumb({ recipe }) {
  const { rows, h, side, inner, dash } = recipe
  return (
    <Ico w={61} h={46}>
      {rows.map((fill, i) => <rect key={i} x="0" y={i * 9} width="61" height="10" fill={fill} />)}
      {inner && [12, 24, 36, 48].map(x => <rect key={x} x={x} y="0" width="1" height="46" fill={inner} />)}
      {side && <path d="M0.500 0v46M60.500 0v46" stroke={side} />}
      {Object.entries(h).map(([i, c]) => <rect key={i} x="0" y={i * 9} width="61" height="1" fill={c} />)}
      {dash.map((c, i) => (
        <path key={i} d={`M3 ${i * 9 + 4.5}h55`} stroke={c} strokeDasharray="7 5" />
      ))}
    </Ico>
  )
}

function ThumbRow({ kind, list = accents, picked }) {
  return list.map((a, i) => (
    <StyleButton key={kind + i} $on={i === picked} aria-label={`${kind} ${i + 1}`}>
      <Thumb recipe={recipes[kind](a, i === 0)} />
    </StyleButton>
  ))
}

const NewStyleIcon = ({ pivot }) => (
  <Ico w={15} h={15}>
    <path d="M2.500 2.500h11v11h-11z" fill="#fff" stroke="#777" />
    {pivot
      ? <path d="M7 4.500h5M4.500 7v5M11.500 7v3.500H7M9 8.500l-2 2 2 2" stroke={blue} />
      : <path d="M6 5h7v8H6zM2 5.500h12M2 8.500h12M2 11.500h12M5.500 2v12M8.500 2v12M11.500 2v12" fill="#bfd0e6" stroke="#999" />}
    <path d="M0 0h6v6H0z" fill="#fff" />
    <path d="M3.500 0v7M0 3.500h7M1 1l5 5M6 1L1 6" stroke={tan} />
    <path d="M3 3h1v1H3z" fill="#fff" />
  </Ico>
)

function StyleGallery() {
  return (
    <Gallery>
      <GalleryHead>Világos</GalleryHead>
      <GalleryRows>
        <ThumbRow kind="light1" />
        <ThumbRow kind="light2" />
        <ThumbRow kind="light3" />
      </GalleryRows>
      <GalleryHead>Közepes</GalleryHead>
      <GalleryRows>
        <ThumbRow kind="medium1" />
        <ThumbRow kind="medium2" picked={5} />
        <ThumbRow kind="medium3" />
        <ThumbRow kind="medium4" />
      </GalleryRows>
      <GalleryHead>Sötét</GalleryHead>
      <GalleryRows>
        <ThumbRow kind="dark1" />
        <ThumbRow kind="dark2" list={darkPairs} />
      </GalleryRows>
      <GalleryFoot>
        <FootItem><NewStyleIcon /><span>Új tá<u>b</u>lázatstílus...</span></FootItem>
        <FootItem><NewStyleIcon pivot /><span><u>K</u>imutatásstílus létrehozása...</span></FootItem>
      </GalleryFoot>
      <Grip><i /><i /><i /><i /></Grip>
    </Gallery>
  )
}

/* ---------- formula bar and sheet ---------- */

const ExcelWindow = styled.main`
  display: flex;
  flex-direction: column;
  flex: 1;
  min-height: 0;
  position: relative;
  margin-bottom: 1px;
  background: #e6e6e6;
  border: 1px solid ${green};
  border-left: 0;
  box-shadow: 0 0 4px rgba(0, 0, 0, 0.600);
`
const FormulaBar = styled.div`
  display: flex;
  align-items: center;
  flex: none;
  height: 46px;
  padding: 0 5px 0 1px;
  font-size: 12px;
`
const FormulaField = styled.div`
  display: flex;
  align-items: center;
  height: 26px;
  background: #fff;
  border: 1px solid #c6c6c6;
  width: ${p => p.$w ? p.$w + 'px' : 'auto'};
  flex: ${p => p.$w ? 'none' : 1};
  padding: ${p => p.$pad};
  margin-right: ${p => p.$mr || 0}px;
  justify-content: space-between;
  input {
    flex: 1;
    min-width: 0;
  }
`
const BarGrip = styled.span`
  display: flex;
  justify-content: center;
  width: 30px;
`
const FxButton = styled.button`
  display: flex;
  align-items: center;
  justify-content: center;
  width: 36px;
  height: 24px;
  font: italic 700 14px "Liberation Serif", serif;
  color: #555;
  small {
    font-size: 10px;
    padding-top: 4px;
  }
`
const SheetArea = styled.div`
  display: flex;
  flex: 1;
  min-height: 0;
`
const GridClip = styled.div`
  flex: 1;
  min-width: 0;
  overflow: hidden;
  border-right: 1px solid #9b9b9b;
  border-bottom: 1px solid #9b9b9b;
`
const Grid = styled.table`
  table-layout: fixed;
  width: ${p => p.$w}px;
  border-spacing: 0;
  font-size: 12px;
  line-height: 16px;
  color: #000;
`
const ColHead = styled.th`
  height: 20px;
  padding: 0;
  font-weight: 400;
  font-size: 12px;
  color: ${p => p.$on ? green : '#222'};
  background: ${p => p.$on ? '#d2d2d2' : '#e6e6e6'};
  border-right: 1px solid #b5b5b5;
  border-bottom: 1px solid ${p => p.$on ? green : '#9b9b9b'};
  svg {
    margin: 2px 0 0 7px;
  }
`
const RowHead = styled.th`
  height: 20px;
  padding: 3px 4px 0 0;
  font-weight: 400;
  text-align: center;
  color: ${p => p.$on ? green : '#222'};
  background: ${p => p.$on ? '#d2d2d2' : '#e6e6e6'};
  border-right: 1px solid #9b9b9b;
  border-bottom: 1px solid #c6c6c6;
`
const Cell = styled.td`
  height: 20px;
  padding: 3px 2px 0;
  text-align: right;
  white-space: nowrap;
  background: ${p => p.$fill || '#fff'};
  border-right: 1px solid ${p => p.$fill ? '#fff' : '#d4d4d4'};
  border-bottom: 1px solid ${p => p.$fill ? '#fff' : '#d4d4d4'};
  ${p => p.$strong && css`
    position: relative;
    padding-top: 1px;
    color: #fff;
    font-weight: 700;
  `}
  ${p => p.$total && css`
    padding-top: 2px;
    border-top: 1px solid #fff;
    border-bottom-color: #4bacc6;
  `}
`
const HeadCell = styled.div`
  display: flex;
  align-items: center;
  justify-content: space-between;
  height: 18px;
  margin-right: -2px;
`
const FilterButton = styled.button`
  display: flex;
  align-items: center;
  justify-content: center;
  width: 17px;
  height: 17px;
  background: linear-gradient(#fff, #e8ecf2);
  border: 1px solid #a5a9b0;
`
const Selection = styled.span`
  position: absolute;
  z-index: 2;
  inset: -2px;
  border: 2px solid ${green};
  pointer-events: none;
  &::after {
    content: "";
    position: absolute;
    right: -3px;
    bottom: -3px;
    width: 6px;
    height: 6px;
    background: ${green};
    border: solid #fff;
    border-width: 1px 0 0 1px;
  }
`
const TableCorner = styled.span`
  position: absolute;
  right: 0;
  bottom: 0;
  width: 3px;
  height: 3px;
  background: #3b5ba8;
`
const VScroll = styled.div`
  display: flex;
  flex-direction: column;
  flex: none;
  width: 15px;
  margin: 2px 3px 0;
  background: #dadada;
`
const ScrollButton = styled.button`
  display: flex;
  align-items: center;
  justify-content: center;
  flex: none;
  width: 15px;
  height: 15px;
  background: #fff;
  border: 1px solid #ababab;
`
const VThumb = styled.div`
  flex: 1;
  margin-bottom: 20px;
  background: #fff;
  border: 1px solid #ababab;
`

const colNames = 'ABCDEFGHIJKLMNOPQRSTUVWXYZ'.split('')
const colWidth = name => name === 'B' ? 90 : 64
const harvest = [
  [2001, 345], [2002, 378], [2003, 398], [2004, 376], [2005, 367],
  [2006, 323], [2007, 392], [2008, 245], [2009, 286], [2010, 271]
]
const rowCount = 26

function FilterArrow() {
  return (
    <FilterButton aria-label="Szűrő">
      <Ico w={7} h={4}><path d="M0 0h7v1H6v1H5v1H4v1H3V3H2V2H1V1H0z" fill="#555" /></Ico>
    </FilterButton>
  )
}

function DataCells({ row }) {
  if (row === 1) {
    return (
      <>
        <Cell $fill="#4bacc6" $strong><HeadCell>Év<FilterArrow /></HeadCell><Selection /></Cell>
        <Cell $fill="#4bacc6" $strong><HeadCell>mennyiség<FilterArrow /></HeadCell></Cell>
      </>
    )
  }
  if (row <= 11) {
    const fill = row % 2 ? '#daeef3' : '#b7dee8'
    return harvest[row - 2].map(v => <Cell key={v} $fill={fill}>{v}</Cell>)
  }
  if (row === 12) {
    return (
      <>
        <Cell $fill="#4bacc6" $strong $total />
        <Cell $fill="#4bacc6" $strong $total>3381<TableCorner /></Cell>
      </>
    )
  }
  return <><Cell /><Cell /></>
}

function Workbook() {
  const total = colNames.reduce((sum, c) => sum + colWidth(c), 22)
  return (
    <SheetArea>
      <GridClip>
        <Grid $w={total}>
          <colgroup>
            <col width="22" />
            {colNames.map(c => <col key={c} width={colWidth(c)} />)}
          </colgroup>
          <thead>
            <tr>
              <ColHead><Ico w={12} h={12} soft><path d="M12 0v12H0z" fill="#b0b0b0" /></Ico></ColHead>
              {colNames.map(c => <ColHead key={c} $on={c === 'A'}>{c}</ColHead>)}
            </tr>
          </thead>
          <tbody>
            {Array.from({ length: rowCount }, (_, i) => i + 1).map(row => (
              <tr key={row}>
                <RowHead $on={row === 1}>{row}</RowHead>
                <DataCells row={row} />
                {colNames.slice(2).map(c => <Cell key={c} />)}
              </tr>
            ))}
          </tbody>
        </Grid>
      </GridClip>
      <VScroll>
        <ScrollButton aria-label="Fel"><Ico w={7} h={4}><path d="M3 0h1v1h1v1h1v1h1v1H0V3h1V2h1V1h1z" fill="#777" /></Ico></ScrollButton>
        <VThumb />
        <ScrollButton aria-label="Le"><Ico w={7} h={4}><path d="M0 0h7v1H6v1H5v1H4v1H3V3H2V2H1V1H0z" fill="#777" /></Ico></ScrollButton>
      </VScroll>
    </SheetArea>
  )
}

/* ---------- sheet tabs and status bar ---------- */

const SheetTabs = styled.nav`
  display: flex;
  flex: none;
  height: 27px;
  font-size: 12px;
  background: #e6e6e6;
`
const TabArrow = styled.button`
  display: flex;
  align-items: center;
  justify-content: center;
  width: 29px;
  padding-left: ${p => p.$pad || 0}px;
  font-weight: 700;
  color: ${green};
`
const SheetTab = styled.button`
  flex: none;
  width: ${p => p.$w}px;
  height: 20px;
  margin-top: 3px;
  overflow: hidden;
  white-space: nowrap;
  border-right: 1px solid #ababab;
  ${p => p.$on && css`
    height: 25px;
    margin: -1px 0 0 9px;
    padding-top: 3px;
    color: ${green};
    font-weight: 700;
    background: #fff;
    border-left: 1px solid #ababab;
    border-bottom: 2px solid ${green};
  `}
`
const HThumb = styled.div`
  width: 128px;
  height: 15px;
  margin: 6px 6px 0 0;
  background: #fff;
  border: 1px solid #ababab;
`
const HArrow = styled(ScrollButton)`
  margin: 6px 21px 0 0;
`
const StatusBar = styled.footer`
  display: flex;
  align-items: center;
  flex: none;
  height: 22px;
  padding: 0 19px 1px 3px;
  background: #f1f1f1;
  border-top: 1px solid #c6c6c6;
`
const ViewButton = styled.button`
  display: flex;
  align-items: center;
  justify-content: center;
  width: 38px;
  height: 21px;
  background: ${p => p.$on ? '#c9c9c9' : 'none'};
`
const ZoomButton = styled.button`
  display: flex;
  align-items: center;
  justify-content: center;
  width: 15px;
  height: 21px;
`
const ZoomRange = styled.input`
  appearance: none;
  width: 100px;
  height: 12px;
  background: linear-gradient(#999, #999) 0 50% / 100% 1px no-repeat;
  &::-webkit-slider-thumb {
    appearance: none;
    width: 4px;
    height: 11px;
    background: #666;
  }
`
const ZoomValue = styled.span`
  width: 40px;
  text-align: right;
`

function App() {
  return (
    <Desktop>
      <GlobalStyle />
      <BackRow>
        <PaintSide>
          <Paint />
          <BackHeader as="div" $inset={0}>
            <TitleRow>
              <QuickAccess />
              <TitleText $ml={276}>{'minta3.xls  [kompatibilis üzemmód] - Excel (Próba)'}</TitleText>
            </TitleRow>
            <TabRow>
              <MainTabs />
              <TellMeBox pad={12} />
            </TabRow>
          </BackHeader>
        </PaintSide>
        <Word />
      </BackRow>
      <ExcelWindow>
        <ExcelHeader $inset={3}>
          <TitleRow>
            <QuickAccess />
            <TitleText $w={346}>2016feladatok1.xlsm - Excel (Próba)</TitleText>
            <ContextTitle>Táblázateszközök</ContextTitle>
            <Spacer />
            <WindowButton aria-label="Menüszalag megjelenítési beállításai">
              <Ico w={13} h={10}><path d="M0.500 0.500h12v9H0.500zM0 2.500h13M6.500 4v4M4.500 6L6.500 4l2 2" stroke="#fff" /></Ico>
            </WindowButton>
            <WindowButton aria-label="Kis méret"><Ico w={10} h={10}><path d="M0 5.500h10" stroke="#fff" /></Ico></WindowButton>
            <WindowButton aria-label="Teljes méret"><Ico w={10} h={10}><path d="M0.500 0.500h9v9h-9z" stroke="#fff" /></Ico></WindowButton>
            <WindowButton aria-label="Bezárás"><Ico w={10} h={10} soft><path d="M0 0l10 10M10 0L0 10" stroke="#fff" strokeWidth="1.200" /></Ico></WindowButton>
          </TitleRow>
          <TabRow>
            <MainTabs />
            <Tab $w={100} $context>Tervezés</Tab>
            <TellMeBox pad={15} />
            <Spacer />
            <UserName>Dr. Pétery Kristóf</UserName>
            <ShareButton>
              <Ico w={15} h={16} soft>
                <circle cx="7" cy="5" r="4.300" stroke="#fff" strokeWidth="1.300" />
                <path d="M0.800 15q0-5 5.200-5.700M11.500 9v6M8.500 12h6" stroke="#fff" strokeWidth="1.300" />
              </Ico>
              Megosztás
            </ShareButton>
          </TabRow>
        </ExcelHeader>
        <ExcelRibbon />
        <FormulaBar>
          <FormulaField $w={102} $pad="0 6px">
            <input aria-label="Név mező" defaultValue="A1" />
            <Ico w={7} h={4}><path d="M0 0h7v1H6v1H5v1H4v1H3V3H2V2H1V1H0z" fill="#777" /></Ico>
          </FormulaField>
          <BarGrip><Ico w={2} h={11}><path d="M0 0h2v2H0zM0 4h2v2H0zM0 9h2v2H0z" fill="#aaa" /></Ico></BarGrip>
          <FormulaField $w={110} $mr={3}>
            <FxButton aria-label="Mégse"><Ico w={12} h={11} soft><path d="M1 1l10 9M11 1L1 10" stroke="#c0c0c0" strokeWidth="2" /></Ico></FxButton>
            <FxButton aria-label="Beírás"><Ico w={13} h={11} soft><path d="M1 6l4 4 7-9" stroke="#c0c0c0" strokeWidth="2.500" /></Ico></FxButton>
            <FxButton aria-label="Függvény beszúrása">f<small>x</small></FxButton>
          </FormulaField>
          <FormulaField $pad="0 4px 0 11px">
            <input aria-label="Szerkesztőléc" defaultValue="Év" />
            <Ico w={8} h={6} soft><path d="M1 1l3 3 3-3" stroke="#666" strokeWidth="2" /></Ico>
          </FormulaField>
        </FormulaBar>
        <Workbook />
        <SheetTabs>
          <TabArrow $pad={20} aria-label="Előző"><Ico w={4} h={7}><path d="M4 0v7H3V6H2V5H1V4H0V3h1V2h1V1h1V0z" fill={green} /></Ico></TabArrow>
          <TabArrow $pad={20} aria-label="Következő"><Ico w={4} h={7}><path d="M0 0v7h1V6h1V5h1V4h1V3H3V2H2V1H1V0z" fill={green} /></Ico></TabArrow>
          <TabArrow as="span" $pad={18}>...</TabArrow>
          <SheetTab $w={145} $on>138.Feladat(barack)</SheetTab>
          <SheetTab $w={224}>138.Feladat(Terméseredmények)</SheetTab>
          <SheetTab $w={94}>139.Feladat</SheetTab>
          <SheetTab $w={94}>140.Feladat</SheetTab>
          <SheetTab $w={216}>140.Fel.Összehasonlítás (egyéni)</SheetTab>
          <SheetTab $w={189}>141.Feladat</SheetTab>
          <Spacer />
          <HThumb />
          <HArrow aria-label="Jobbra"><Ico w={4} h={7}><path d="M0 0v7h1V6h1V5h1V4h1V3H3V2H2V1H1V0z" fill="#555" /></Ico></HArrow>
        </SheetTabs>
        <StatusBar>
          <span>Kész</span>
          <Spacer />
          <ViewButton $on aria-label="Normál nézet"><Ico w={13} h={13}><path d="M0.500 0.500h12v12H0.500zM0 4.500h13M0 8.500h13M4.500 0v13M8.500 0v13" stroke="#666" /></Ico></ViewButton>
          <ViewButton aria-label="Lapelrendezés nézet"><Ico w={14} h={13}><path d="M0.500 0.500h13v12H0.500zM3.500 2.500h7v8h-7zM5 4.500h4M5 6.500h4M5 8.500h4" stroke="#666" /></Ico></ViewButton>
          <ViewButton aria-label="Oldaltörés megtekintése"><Ico w={14} h={13}><path d="M0.500 0.500h13v12H0.500zM0 7.500h9.500V0M4.500 0v8" stroke="#666" /></Ico></ViewButton>
          <ZoomButton aria-label="Kicsinyítés"><Ico w={6} h={2}><path d="M0 0h6v2H0z" fill="#555" /></Ico></ZoomButton>
          <ZoomRange type="range" aria-label="Nagyítás" min="0" max="100" defaultValue="50" />
          <ZoomButton aria-label="Nagyítás"><Ico w={8} h={8}><path d="M3 0h2v3h3v2H5v3H3V5H0V3h3z" fill="#555" /></Ico></ZoomButton>
          <ZoomValue>100%</ZoomValue>
        </StatusBar>
      </ExcelWindow>
    </Desktop>
  )
}

export default App
